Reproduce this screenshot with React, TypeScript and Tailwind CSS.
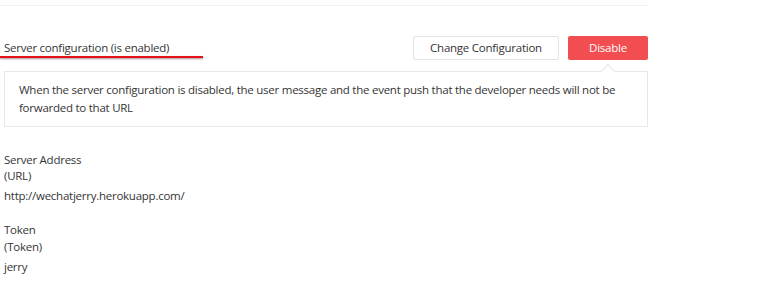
export default function App() {
  return (
    <div className="h-[302px] w-[764px] bg-white font-['Open_Sans',sans-serif] text-[11.5px] tracking-[-0.25px] text-[#353535]">
      <div className="w-[648px] pt-[5px]">
        <div className="h-px bg-[#f0f0f0]" />

        {/* heading + actions */}
        <div className="relative mt-[30px] flex h-[24px] items-center justify-between pl-1">
          <span>Server configuration (is enabled)</span>
          <div className="flex gap-[9px]">
            <button className="h-[24px] w-[146px] rounded-[2px] border border-[#e3e3e3] bg-white text-[11.5px] tracking-[-0.25px] text-[#353535]">
              Change Configuration
            </button>
            <button className="h-[24px] w-[80px] rounded-[2px] bg-[#f24d50] text-[11.5px] tracking-[-0.25px] text-white">
              Disable
            </button>
          </div>
          <div className="absolute left-0 top-[20px] h-[2px] w-[203px] bg-[#e3141c] shadow-[0_1px_2px_rgba(60,0,0,0.45)]" />
        </div>

        {/* popover note */}
        <div className="relative ml-1 mt-[11px] h-[56px] border border-[#e8e8e8] px-[14px] py-[9px] leading-[18px]">
          <div className="absolute -top-[6px] left-[598px] h-[10px] w-[10px] rotate-45 border-l border-t border-[#e8e8e8] bg-white" />
          When the server configuration is disabled, the user message and the event push that the developer needs will not be
          forwarded to that URL
        </div>

        {/* fields */}
        <div className="ml-1 mt-[25px] leading-[16px]">
          <div>Server Address</div>
          <div>(URL)</div>
          <div className="mt-[3px] leading-[18px]">http://wechatjerry.herokuapp.com/</div>
        </div>
        <div className="ml-1 mt-[16px] leading-[17px]">
          <div>Token</div>
          <div>(Token)</div>
          <div className="mt-[3px] leading-[18px]">jerry</div>
        </div>
      </div>
    </div>
  );
}
